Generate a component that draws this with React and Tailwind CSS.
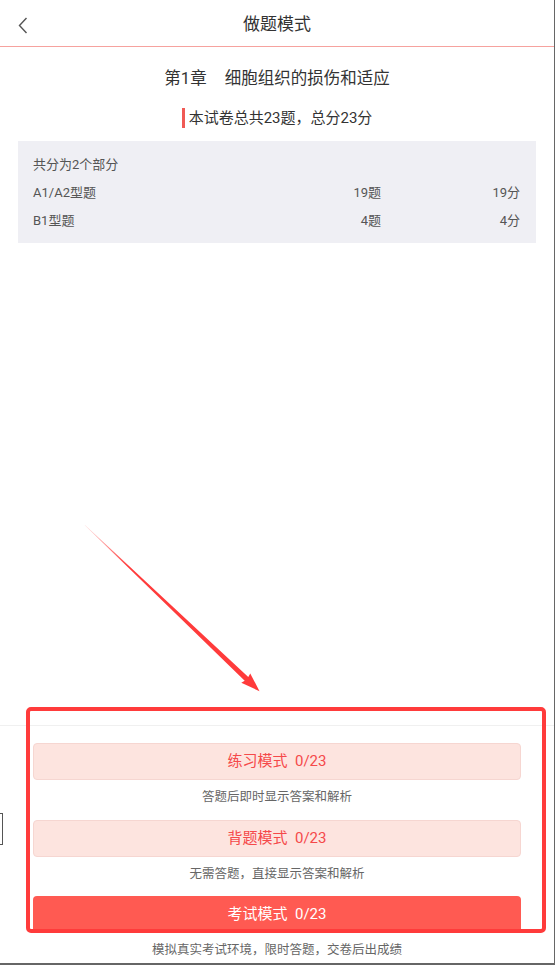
import React from 'react';

const modes = [
  { name: '练习模式', desc: '答题后即时显示答案和解析', solid: false, pb: 'pb-[14px]' },
  { name: '背题模式', desc: '无需答题，直接显示答案和解析', solid: false, pb: 'pb-[13px]' },
  { name: '考试模式', desc: '模拟真实考试环境，限时答题，交卷后出成绩', solid: true, pb: 'pb-[4px]' },
];

const parts = [
  { label: 'A1/A2型题', count: '19题', score: '19分' },
  { label: 'B1型题', count: '4题', score: '4分' },
];

export default function App() {
  return (
    <div className="relative w-[555px] h-[965px] flex flex-col bg-white border-r border-b-2 border-[#666] overflow-hidden font-['Roboto','Noto_Sans_CJK_SC',sans-serif]">
      {/* 顶部导航 */}
      <div className="relative h-[47px] shrink-0 flex items-center justify-center border-b border-[#f6a29e]">
        <button className="absolute left-[15px] top-[15px] w-[16px] h-[20px] flex items-center justify-center">
          <svg width="10" height="17" viewBox="0 0 10 17">
            <path d="M8.5 1 L1.5 8.5 L8.5 16" fill="none" stroke="#555" strokeWidth="1.4" />
          </svg>
        </button>
        <h1 className="text-[17px] text-[#333] leading-none mt-[2px]">做题模式</h1>
      </div>

      {/* 试卷信息 */}
      <div className="flex flex-col items-center pt-[22px]">
        <div className="flex items-center text-[16.5px] text-[#333] leading-[20px]">
          <span>第1章</span>
          <span className="ml-[18px]">细胞组织的损伤和适应</span>
        </div>
        <div className="mt-[19px] flex items-center h-[20px]">
          <div className="w-[3px] h-[20px] bg-[#f05a55] mr-[4px]" />
          <span className="text-[15px] text-[#333] leading-[20px]">本试卷总共23题，总分23分</span>
        </div>
      </div>

      <div className="mx-[18px] mt-[13px] w-[518px] bg-[#efeff4] pt-[10px] pb-[8px] pl-[15px] pr-[16px] text-[13px] text-[#555]">
        <div className="h-[28px] leading-[28px]">共分为2个部分</div>
        {parts.map(p => (
          <div key={p.label} className="flex h-[28px] leading-[28px]">
            <span className="flex-1">{p.label}</span>
            <span className="w-[100px] text-right">{p.count}</span>
            <span className="w-[139px] text-right">{p.score}</span>
          </div>
        ))}
      </div>

      <div className="flex-1" />

      {/* 模式选择 */}
      <div className="shrink-0 border-t border-[#f0f0f0] pt-[17px] px-[33px]">
        {modes.map(m => (
          <div key={m.name}>
            <button
              className={
                m.solid
                  ? 'w-[488px] h-[37px] rounded-[4px] bg-[#ff5a52] text-white text-[15px] flex items-center justify-center'
                  : 'w-[488px] h-[37px] rounded-[4px] bg-[#fde4df] border border-[#f6d6d1] text-[#f5494a] text-[15px] flex items-center justify-center'
              }
            >
              {m.name}&nbsp;&nbsp;0/23
            </button>
            <p className={`pt-[8px] ${m.pb} text-center text-[12.5px] leading-[18px] text-[#666]`}>{m.desc}</p>
          </div>
        ))}
      </div>

      {/* 标注：箭头 */}
      <svg className="absolute left-0 top-0 pointer-events-none" width="555" height="965">
        <defs>
          <linearGradient id="arrowFade" x1="0" y1="0" x2="240" y2="0" gradientUnits="userSpaceOnUse">
            <stop offset="0" stopColor="#ff3b3b" stopOpacity="0.15" />
            <stop offset="0.25" stopColor="#ff3b3b" stopOpacity="1" />
            <stop offset="1" stopColor="#ff3b3b" stopOpacity="1" />
          </linearGradient>
        </defs>
        <g transform="translate(85 525) rotate(43.6)">
          <polygon points="0,0 223,-2.6 222,-6.5 241,0 222,6.5 223,2.6 0,0.4" fill="url(#arrowFade)" />
        </g>
      </svg>

      {/* 标注：红框 */}
      <div className="absolute left-[26px] top-[707px] w-[520px] h-[226px] border-[4px] border-[#ff3b3b] rounded-[5px] pointer-events-none" />

      {/* 左侧残留小框 */}
      <div className="absolute left-[-10px] top-[813px] w-[13px] h-[32px] border border-[#555]" />
    </div>
  );
}
